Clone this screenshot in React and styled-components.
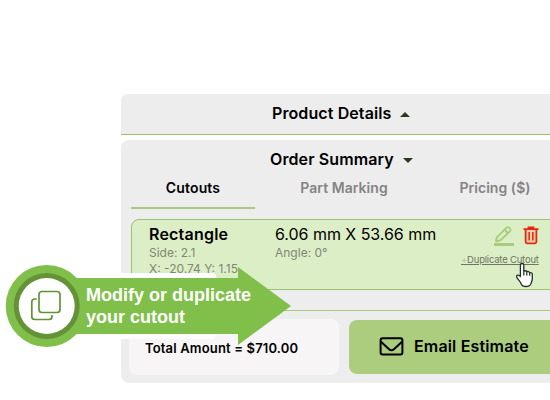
import styled, { createGlobalStyle } from "styled-components";

const GlobalStyle = createGlobalStyle`
  * {
    box-sizing: border-box;
  }

  body {
    margin: 0;
    background-color: #fff;
    font-family: Inter, "Liberation Sans", sans-serif;
    color: #000;
    overflow: hidden;
  }

  svg {
    display: block;
    flex-shrink: 0;
  }
`;

const Page = styled.main`
  position: relative;
  width: 550px;
  height: 400px;
  padding: 94px 0 0 121px;
  overflow: hidden;
`;

const Sidebar = styled.div`
  width: 446px;
  display: flex;
  flex-direction: column;
  gap: 5px;
`;

const DetailsPanel = styled.section`
  height: 41px;
  padding-top: 8px;
  background-color: #ededed;
  border-bottom: 1px solid #9dc071;
  border-radius: 6px 6px 0 0;
`;

const SummaryPanel = styled.section`
  height: 243px;
  padding: 8px 10px 0;
  background-color: #ededed;
  border-radius: 8px;
`;

const PanelTitle = styled.h2`
  display: flex;
  align-items: center;
  margin: 0;
  padding-left: ${(props) => props.$indent}px;
  font-size: 16px;
  font-weight: 600;
  line-height: 23px;
  letter-spacing: 0.1px;
  white-space: nowrap;
`;

const Caret = styled.svg`
  width: 10px;
  height: 5px;
  margin: 1px 0 0 9px;
  fill: #2c3a1c;
`;

const Tabs = styled.nav`
  display: grid;
  grid-template-columns: repeat(3, 124px);
  gap: 27px;
  margin-top: 1px;
`;

const Tab = styled.a`
  height: 37px;
  padding-top: 5px;
  border-bottom: 2px solid ${(props) => (props.$active ? "#aaca82" : "transparent")};
  color: ${(props) => (props.$active ? "#000" : "#848484")};
  font-size: 14px;
  font-weight: 600;
  line-height: 22px;
  letter-spacing: ${(props) => (props.$active ? "0.15px" : "0.05px")};
  text-align: center;
  white-space: nowrap;
`;

const Cutout = styled.article`
  display: grid;
  grid-template-columns: 126px 1fr 95px;
  height: 71px;
  margin-top: 10px;
  padding: 5px 0 0 17px;
  background-color: #dceec5;
  border: 1px solid #9dc071;
  border-radius: 8px;
`;

const CutoutName = styled.h3`
  margin: 0 0 1px;
  font-size: 16px;
  font-weight: ${(props) => (props.$light ? 400 : 600)};
  line-height: 19px;
  letter-spacing: ${(props) => (props.$light ? "-0.04px" : "0.2px")};
  white-space: nowrap;
`;

const CutoutInfo = styled.p`
  margin: 0;
  color: #7f8777;
  font-size: 12px;
  line-height: 16px;
  white-space: nowrap;
`;

const Actions = styled.div`
  display: flex;
  flex-direction: column;
`;

const ActionIcons = styled.div`
  display: flex;
  gap: 9px;
  height: 28px;
  padding: 1px 0 0 32px;
`;

const Duplicate = styled.a`
  color: #6d7564;
  font-size: 9.5px;
  line-height: 13px;
  letter-spacing: -0.21px;
  text-decoration: underline;
  white-space: nowrap;

  span {
    color: #a9c985;
  }
`;

const Divider = styled.hr`
  height: 1px;
  margin: 20px 0 0;
  border: 0;
  background-color: #a9cb7f;
`;

const Footer = styled.footer`
  display: grid;
  grid-template-columns: 210px 208px;
  gap: 10px;
  align-items: center;
  margin: 8px 0 0 -2px;
`;

const Total = styled.div`
  height: 56px;
  padding: 19px 0 0 16px;
  border-radius: 8px;
  background-color: #f7f5f6;
  font-size: 13px;
  font-weight: 600;
  line-height: 20px;
  letter-spacing: 0.16px;
  white-space: nowrap;
`;

const EmailButton = styled.button`
  display: flex;
  align-items: center;
  gap: 10px;
  height: 54px;
  padding: 0 0 2px 30px;
  border: 0;
  border-radius: 8px;
  background-color: #abcd7d;
  color: #000;
  font-family: inherit;
  font-size: 16px;
  font-weight: 600;
  letter-spacing: 0.16px;
  white-space: nowrap;
`;

const Cursor = styled.svg`
  position: absolute;
  left: 515px;
  top: 262px;
  width: 19px;
  height: 26px;
`;

// Help callout that floats over the order summary
const Callout = styled.aside`
  position: absolute;
  left: 0;
  top: 260px;
  width: 300px;
  height: 92px;
`;

const CalloutShape = styled.svg`
  width: 300px;
  height: 92px;
`;

const CalloutText = styled.p`
  position: absolute;
  left: 86px;
  top: 24px;
  margin: 0;
  color: #fff;
  font-family: "Liberation Sans", Arial, sans-serif;
  font-size: 18px;
  font-weight: 700;
  line-height: 22px;
  white-space: nowrap;
`;

function PencilIcon() {
  return (
    <svg width="21" height="24" viewBox="0 0 21 24" fill="none">
      <path
        d="M3 15.2l.8-3.8L13.5 1.7a1.8 1.8 0 0 1 2.6 0l.9.9a1.8 1.8 0 0 1 0 2.6L7.3 14.4 3 15.2zM11.7 3.8l3.2 3.2"
        stroke="#a9cb7e"
        strokeWidth="1.9"
        strokeLinejoin="round"
      />
      <path d="M1 17h20v3H1z" fill="#a9cb7e" />
    </svg>
  );
}

function TrashIcon() {
  return (
    <svg width="16" height="20" viewBox="0 0 16 20" fill="none">
      <path d="M3 4h10v13H3z" fill="#f6cfae" />
      <path
        d="M.5 3.2h15M5.5 2.6V1.5h5v1.1M2.6 3.8v12a1.5 1.5 0 0 0 1.5 1.5h7.8a1.5 1.5 0 0 0 1.5-1.5v-12"
        stroke="#e4290f"
        strokeWidth="1.8"
      />
      <path d="M6.2 6v8.5M9.8 6v8.5" stroke="#e4290f" strokeWidth="1.6" />
    </svg>
  );
}

function MailIcon() {
  return (
    <svg width="25" height="19" viewBox="0 0 25 19" fill="none">
      <rect x="1.6" y="1.2" width="21.8" height="16.4" rx="2" stroke="#000" strokeWidth="2" />
      <path
        d="M2 4.8l7.8 7.2c1.8 1.7 3.6 1.7 5.4 0L23 4.8"
        stroke="#000"
        strokeWidth="2"
      />
    </svg>
  );
}

function HandCursor() {
  return (
    <Cursor viewBox="0 0 19 26">
      <path
        d="M5.4 14.6V3.2a1.7 1.7 0 0 1 3.4 0v6.2c.4-1 2.8-.9 3 .6.6-.9 2.7-.6 2.9.9.7-.7 2.6-.2 2.6 1.4v4.8c0 2.2-1.2 3.4-1.5 4.8-.5 2-2.4 2.6-4.9 2.6-2.8 0-4-.7-4.9-3.1-.8-2-2.4-3.3-3.9-5.5-.9-1.3-.5-2.4.4-2.7 1.2-.5 2.1.4 2.9 1.4z"
        fill="#fff"
        stroke="#222e2b"
        strokeWidth="1.3"
        strokeLinejoin="round"
      />
      <path d="M8.8 9.4v4.2M11.8 10.2v3.4M14.7 11v2.8" stroke="#222e2b" strokeWidth="1.2" />
    </Cursor>
  );
}

function DuplicateCallout() {
  return (
    <Callout>
      <CalloutShape viewBox="0 0 300 92" fill="none">
        <rect x="60" y="13" width="156" height="66" rx="4" fill="#fff" />
        <path d="M50 18H238V7l53 39-53 39V74H50z" fill="#81bf4b" />
        <circle cx="46.7" cy="46" r="41" fill="#81bf4b" />
        <circle cx="46.7" cy="46" r="33" fill="#639336" />
        <circle cx="46.7" cy="46" r="28" fill="#fff" />
        <rect x="39" y="31.5" width="21" height="21" rx="3" stroke="#639336" strokeWidth="1.7" />
        <path
          d="M36.8 39h-2a3 3 0 0 0-3 3v14.5a3 3 0 0 0 3 3H49a3 3 0 0 0 3-3V55"
          stroke="#639336"
          strokeWidth="1.7"
        />
      </CalloutShape>
      <CalloutText>
        Modify or duplicate
        <br />
        your cutout
      </CalloutText>
    </Callout>
  );
}

function App() {
  return (
    <Page>
      <GlobalStyle />
      <Sidebar>
        <DetailsPanel>
          <PanelTitle $indent={151}>
            Product Details
            <Caret viewBox="0 0 10 5">
              <path d="M0 5l5-5 5 5z" />
            </Caret>
          </PanelTitle>
        </DetailsPanel>
        <SummaryPanel>
          <PanelTitle $indent={139}>
            Order Summary
            <Caret viewBox="0 0 10 5">
              <path d="M0 0h10L5 5z" />
            </Caret>
          </PanelTitle>
          <Tabs>
            <Tab $active>Cutouts</Tab>
            <Tab>Part Marking</Tab>
            <Tab>Pricing ($)</Tab>
          </Tabs>
          <Cutout>
            <div>
              <CutoutName>Rectangle</CutoutName>
              <CutoutInfo>Side: 2.1</CutoutInfo>
              <CutoutInfo>X: -20.74 Y: 1.15</CutoutInfo>
            </div>
            <div>
              <CutoutName $light>6.06 mm X 53.66 mm</CutoutName>
              <CutoutInfo>Angle: 0°</CutoutInfo>
            </div>
            <Actions>
              <ActionIcons>
                <PencilIcon />
                <TrashIcon />
              </ActionIcons>
              <Duplicate>
                <span>+</span>Duplicate Cutout
              </Duplicate>
            </Actions>
          </Cutout>
          <Divider />
          <Footer>
            <Total>Total Amount = $710.00</Total>
            <EmailButton>
              <MailIcon />
              Email Estimate
            </EmailButton>
          </Footer>
        </SummaryPanel>
      </Sidebar>
      <DuplicateCallout />
      <HandCursor />
    </Page>
  );
}

export default App;
